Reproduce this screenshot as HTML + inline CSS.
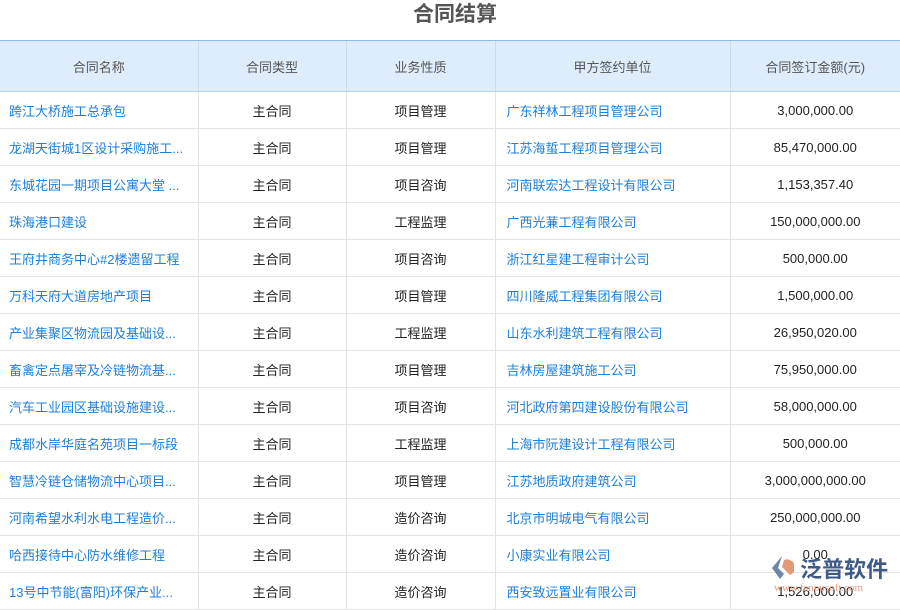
<!DOCTYPE html><html><head><meta charset="utf-8"><style>
body{margin:0;width:900px;height:600px;overflow:hidden;background:#fff;font-family:"Liberation Sans","Noto Sans CJK SC",sans-serif;font-size:13px;color:#222}
h1{margin:0;height:40px;line-height:30px;text-align:center;font-size:21px;color:#555;font-weight:bold;padding-left:10px;box-sizing:border-box}
table{border-collapse:collapse;table-layout:fixed;width:900px}
th{height:50px;padding:0;background:#deedfb;color:#555;font-weight:normal;border-top:1px solid #8bbce8;border-bottom:1px solid #b9d5ee;border-left:1px solid #c9dcef}
td{height:36px;border-bottom:1px solid #e4e4e4;border-left:1px solid #e4e4e4;text-align:center;white-space:nowrap;overflow:hidden;padding:0}
th:first-child,td:first-child{border-left:none}
td.l{text-align:left;padding-left:9px;color:#1e7fd9;text-overflow:ellipsis}
td.u{text-align:left;padding-left:11px;color:#1e7fd9}
.logo{position:absolute;left:770px;top:552px;color:#3d5b85;font-size:22px;font-weight:bold;white-space:nowrap}
.logo small{position:absolute;left:4px;top:30px;font-size:11px;color:#e8a080;font-weight:normal;font-family:"Liberation Serif",serif;white-space:nowrap}
</style></head><body>
<h1>合同结算</h1>
<table><colgroup><col style="width:198px"><col style="width:148px"><col style="width:149px"><col style="width:235px"><col style="width:170px"></colgroup>
<tr><th>合同名称</th><th>合同类型</th><th>业务性质</th><th>甲方签约单位</th><th>合同签订金额(元)</th></tr>
<tr><td class="l">跨江大桥施工总承包</td><td>主合同</td><td>项目管理</td><td class="u">广东祥林工程项目管理公司</td><td>3,000,000.00</td></tr>
<tr><td class="l">龙湖天街城1区设计采购施工...</td><td>主合同</td><td>项目管理</td><td class="u">江苏海蜇工程项目管理公司</td><td>85,470,000.00</td></tr>
<tr><td class="l">东城花园一期项目公寓大堂 ...</td><td>主合同</td><td>项目咨询</td><td class="u">河南联宏达工程设计有限公司</td><td>1,153,357.40</td></tr>
<tr><td class="l">珠海港口建设</td><td>主合同</td><td>工程监理</td><td class="u">广西光蒹工程有限公司</td><td>150,000,000.00</td></tr>
<tr><td class="l">王府井商务中心#2楼遗留工程</td><td>主合同</td><td>项目咨询</td><td class="u">浙江红星建工程审计公司</td><td>500,000.00</td></tr>
<tr><td class="l">万科天府大道房地产项目</td><td>主合同</td><td>项目管理</td><td class="u">四川隆威工程集团有限公司</td><td>1,500,000.00</td></tr>
<tr><td class="l">产业集聚区物流园及基础设...</td><td>主合同</td><td>工程监理</td><td class="u">山东水利建筑工程有限公司</td><td>26,950,020.00</td></tr>
<tr><td class="l">畜禽定点屠宰及冷链物流基...</td><td>主合同</td><td>项目管理</td><td class="u">吉林房屋建筑施工公司</td><td>75,950,000.00</td></tr>
<tr><td class="l">汽车工业园区基础设施建设...</td><td>主合同</td><td>项目咨询</td><td class="u">河北政府第四建设股份有限公司</td><td>58,000,000.00</td></tr>
<tr><td class="l">成都水岸华庭名苑项目一标段</td><td>主合同</td><td>工程监理</td><td class="u">上海市阮建设计工程有限公司</td><td>500,000.00</td></tr>
<tr><td class="l">智慧冷链仓储物流中心项目...</td><td>主合同</td><td>项目管理</td><td class="u">江苏地质政府建筑公司</td><td>3,000,000,000.00</td></tr>
<tr><td class="l">河南希望水利水电工程造价...</td><td>主合同</td><td>造价咨询</td><td class="u">北京市明城电气有限公司</td><td>250,000,000.00</td></tr>
<tr><td class="l">哈西接待中心防水维修工程</td><td>主合同</td><td>造价咨询</td><td class="u">小康实业有限公司</td><td>0.00</td></tr>
<tr><td class="l">13号中节能(富阳)环保产业...</td><td>主合同</td><td>造价咨询</td><td class="u">西安致远置业有限公司</td><td>1,526,000.00</td></tr>
</table>
<div class="logo"><svg width="24" height="26" viewBox="0 0 24 26" style="vertical-align:-4px"><path d="M12 1 L2 13 L10 24 L14 19 L8 13 Z" fill="#6f86a8"/><path d="M14 5 A8 8 0 0 1 20 20 L12 12 Z" fill="#e49a78"/></svg> 泛普软件<small>www.fanpusoft.com</small></div>
</body></html>
